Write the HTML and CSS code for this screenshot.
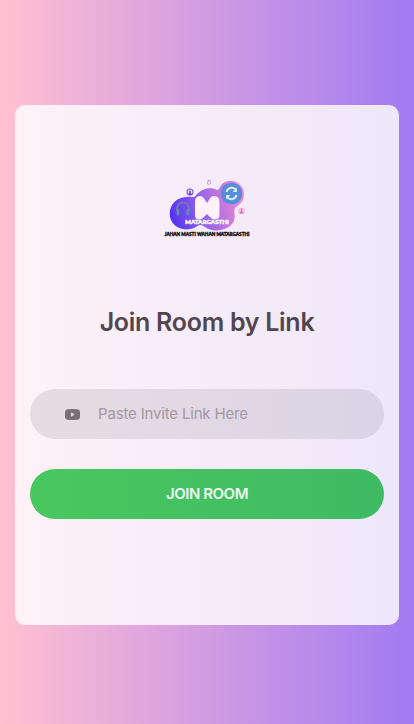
FILE: index.html
```html
<!DOCTYPE html>
<html lang="en">
<head>
<meta charset="utf-8">
<meta name="viewport" content="width=device-width, initial-scale=1">
<title>Join Room</title>
<link rel="stylesheet" href="styles.css">
</head>
<body>
<main class="card">
  <svg class="logo" viewBox="0 0 100 75" role="img" aria-label="Matargasthi">
    <defs>
      <linearGradient id="blob" gradientUnits="userSpaceOnUse" x1="14" y1="45" x2="88" y2="28">
        <stop offset="0" stop-color="#5434ee"/><stop offset=".45" stop-color="#9a66ea"/><stop offset="1" stop-color="#f98ad2"/>
      </linearGradient>
    </defs>
    <path fill="url(#blob)" d="M29 27C35 26 37 29 40 24C46 18 54 17 60 20C63 20 63 14 68 12C76 8 87 14 87 24C87 33 81 35 78 38C76 41 79 45 77 51C72 61 56 63 48 57C45 55 43 54 39 57C30 62 18 59 14 50C10 38 17 28 29 27Z"/>
    <path fill="#fff0fa" d="M38 45V32Q38 26 43 26Q46 26 48 30L50 33L52 30Q54 26 57 26Q62.500 26 62.500 32V45Q62.500 49.500 58 49.500Q55 49.500 53 47L50 44L47 47Q45 49.500 42 49.500Q38 49.500 38 45Z"/>
    <circle cx="74.500" cy="23.500" r="10.800" fill="#568dd9"/>
    <g fill="none" stroke="#d6edf6" stroke-width="2"><path d="M69.500 22a5.300 5.300 0 0 1 9-2.500M79.500 25a5.300 5.300 0 0 1-9 2.500"/></g>
    <path fill="#d6edf6" d="M80 17.500v4.500h-4.500zM69 29.500v-4.500h4.500z"/>
    <path fill="none" stroke="#6c7fae" stroke-width="1.600" d="M20 41v-2.500a6 6 0 0 1 12 0v2.500"/>
    <path fill="none" stroke="#5594a8" stroke-width="2.800" stroke-linecap="round" d="M21 40.500v3.500M31 40.500v3.500"/>
    <circle cx="33" cy="22" r="3" fill="#eee9ff" stroke="#7656e8" stroke-width="1.100"/>
    <path fill="#6846e4" d="M32.200 20.500h1.600v2.500l1 1v1h-3.600v-1l1-1z"/>
    <circle cx="84.500" cy="41" r="2.700" fill="#ffe3f4" stroke="#ed9ad2" stroke-width=".9"/>
    <path fill="#e56eb9" d="M83.700 39h1.600v2.500l1 1v1h-3.600v-1l1-1z"/>
    <circle cx="52" cy="12.700" r="1.700" fill="none" stroke="#b591eb" stroke-width=".8"/>
    <path fill="#b591eb" d="M50.500 10h3v.8h-3z"/>
    <text class="logo-name" x="28" y="54" textLength="44" lengthAdjust="spacingAndGlyphs">MATARGASTHI</text>
    <text class="logo-tagline" x="7.500" y="65.800" textLength="85" lengthAdjust="spacingAndGlyphs">JAHAN MASTI WAHAN MATARGASTHI</text>
  </svg>
  <h1 class="title">Join Room by Link</h1>
  <label class="field">
    <svg class="field-icon" viewBox="0 0 15 11" aria-hidden="true">
      <path fill="#7b6e79" fill-rule="evenodd" d="M2.500.3Q7.500-.2 12.500.3Q15 .5 15 3V8Q15 10.500 12.500 10.700Q7.500 11.200 2.500 10.700Q0 10.500 0 8V3Q0 .5 2.500.3ZM6 3.300V7.700L9.800 5.500Z"/>
    </svg>
    <input class="field-input" type="text" placeholder="Paste Invite Link Here">
  </label>
  <button class="join" type="button">JOIN ROOM</button>
</main>
</body>
</html>
```
FILE: styles.css
```css
* { box-sizing: border-box; }

body {
  margin: 0;
  min-height: 100vh;
  padding: 105px 15px 99px;
  background: linear-gradient(90deg, #ffc0d2 0%, #ffbfd2 2%, #dda4de 38%, #a57df1 96%, #a37bf2 100%);
  font-family: Inter, "Liberation Sans", sans-serif;
}

.card {
  height: 520px;
  padding: 65px 15px 0;
  border-radius: 10px;
  background: linear-gradient(90deg, #fff2f7, #f8edf8 38%, #eee7fb);
  display: flex;
  flex-direction: column;
  align-items: center;
}

.logo { width: 100px; height: 75px; }

.logo-name, .logo-tagline {
  font-family: Lato, sans-serif;
  font-weight: 900;
}

.logo-name { font-size: 6px; fill: #fff; stroke: #fff; stroke-width: .4px; }
.logo-tagline { font-size: 5px; fill: #160f18; stroke: #160f18; stroke-width: .4px; }

.title {
  margin: 60px 0 0;
  height: 34px;
  font-size: 25px;
  line-height: 34px;
  font-weight: 600;
  letter-spacing: -.28px;
  white-space: nowrap;
  color: #51464f;
}

.field {
  width: 100%;
  height: 50px;
  margin-top: 50px;
  padding: 0 35px;
  border-radius: 25px;
  background: linear-gradient(90deg, #e7dce1, #dad4e7);
  display: flex;
  align-items: center;
  gap: 18px;
}

.field-icon { width: 15px; height: 11px; flex: none; }

.field-input {
  flex: 1;
  min-width: 0;
  padding: 0;
  border: 0;
  outline: 0;
  background: none;
  font: 400 15px/20px Inter, sans-serif;
  letter-spacing: -.17px;
}

.field-input::placeholder { color: #a397a6; opacity: 1; }

.join {
  width: 100%;
  height: 50px;
  margin-top: 30px;
  padding: 0;
  border: 0;
  border-radius: 25px;
  background: linear-gradient(90deg, #49c75f, #3ebb63);
  color: #edf9f2;
  font: 600 15px/20px Inter, sans-serif;
  letter-spacing: -.47px;
}
```
